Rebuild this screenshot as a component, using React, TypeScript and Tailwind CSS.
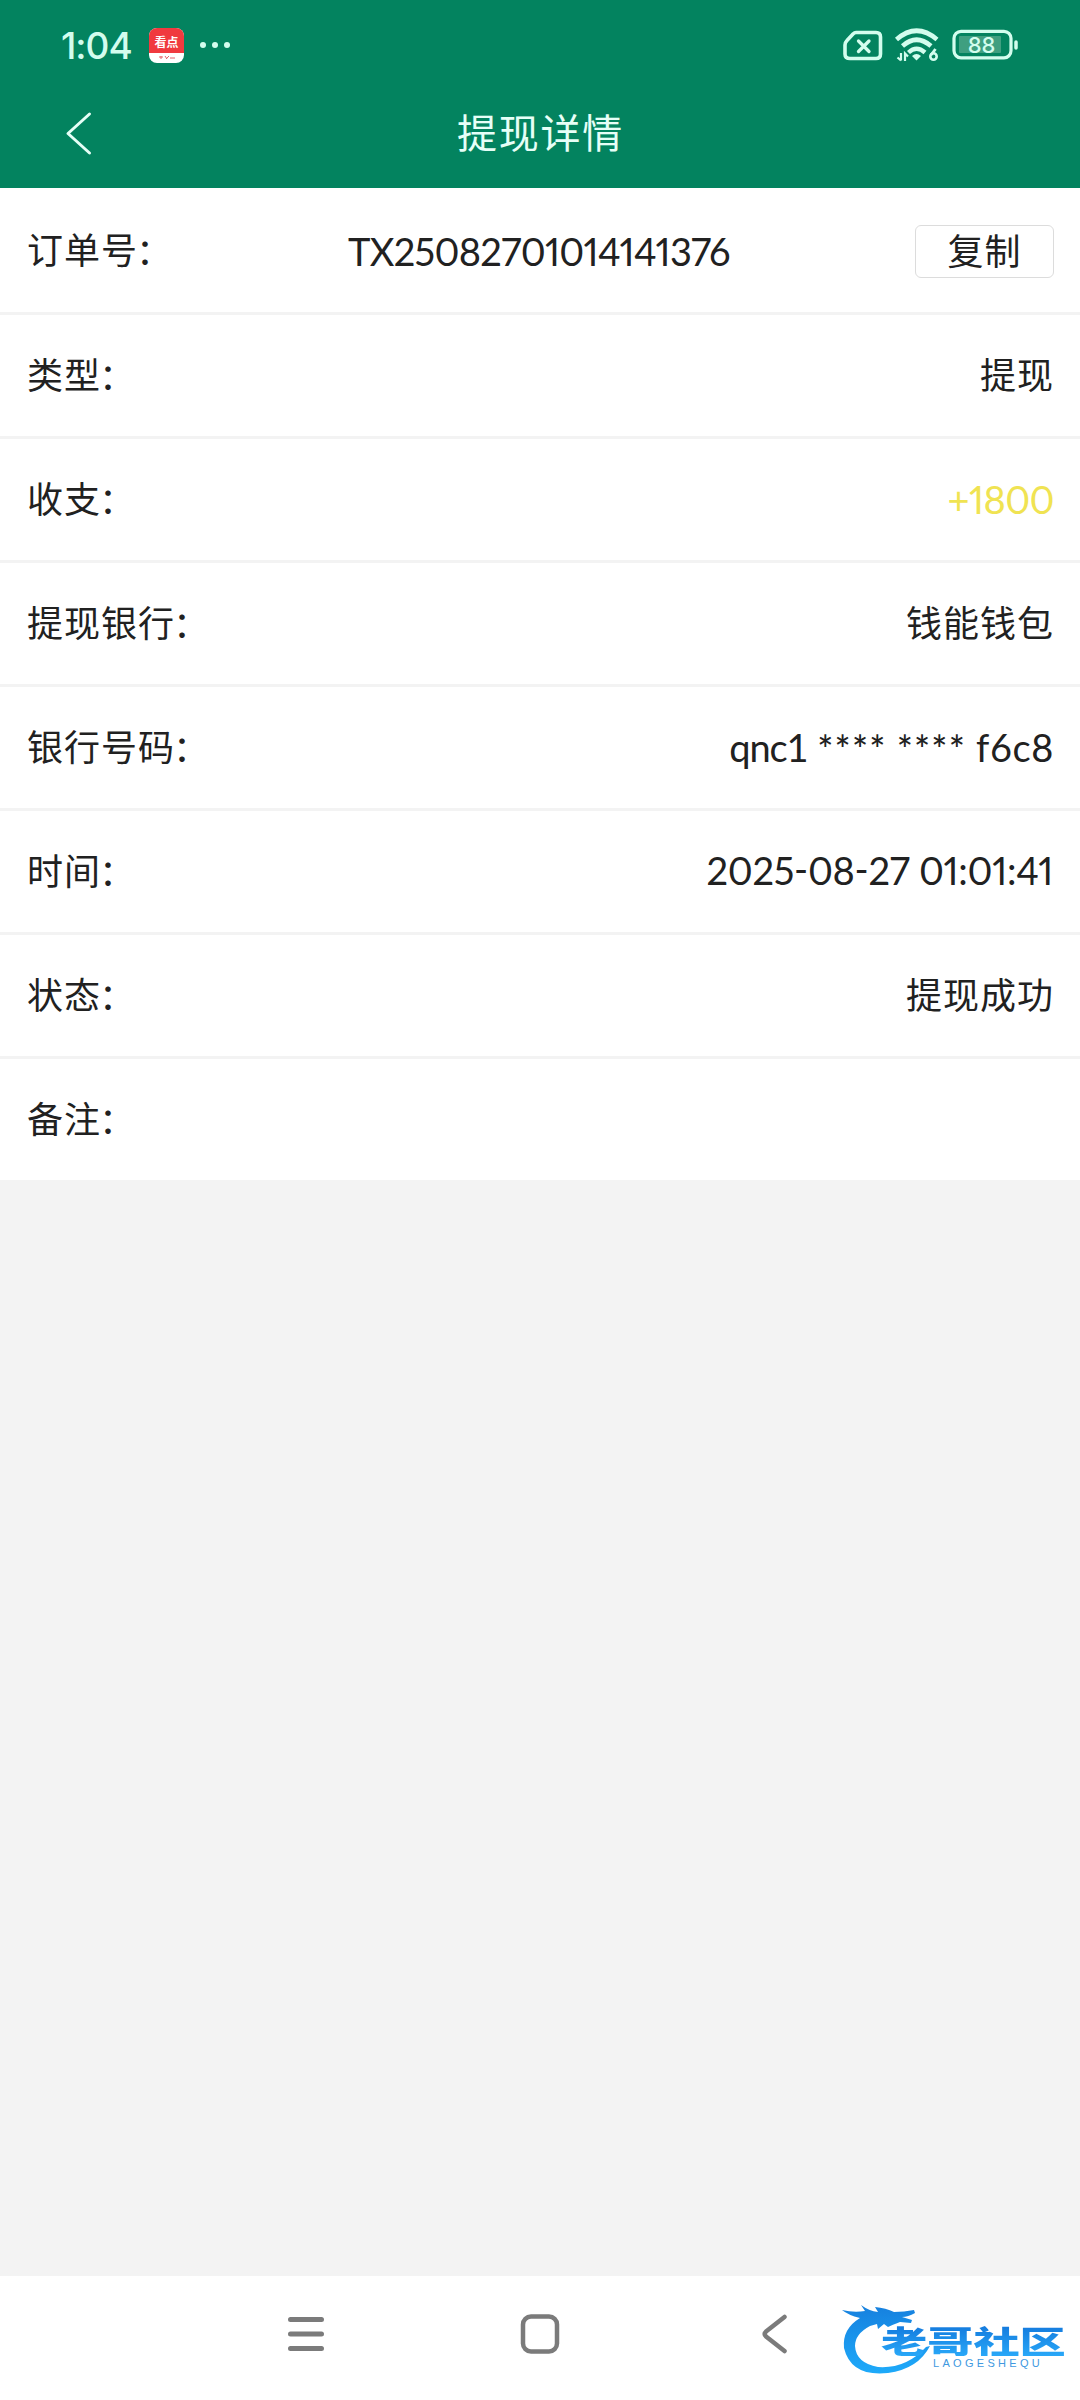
import type { ReactNode } from "react";

type RowProps = { label: string; children?: ReactNode; last?: boolean };

function Label({ text }: { text: string }) {
  return (
    <span className="tracking-[1px]">
      {text}
      <span className="relative left-[-2px] top-[1px]">：</span>
    </span>
  );
}

function Row({ label, children, last }: RowProps) {
  return (
    <div
      className={
        last
          ? "flex h-[121px] items-center justify-between bg-white pb-[1px] pl-[27px] pr-[26px]"
          : "flex h-[124px] items-center justify-between border-b-[3px] border-[#f3f3f3] bg-white pb-[1px] pl-[27px] pr-[26px]"
      }
    >
      <Label text={label} />
      {children}
    </div>
  );
}

function StatusBar() {
  return (
    <div className="flex h-[88px] items-center justify-between pl-[61px] pr-[60px] pt-[2px] text-[#d3fdee]">
      <div className="flex items-center">
        <span className="w-[88px] pt-[1px] font-['Inter'] text-[37px] font-medium leading-none tracking-[-1px]">1:04</span>
        <span className="flex h-[35px] w-[35px] flex-col items-center overflow-hidden rounded-[8px] bg-white">
          <span className="flex h-[25px] w-full items-center justify-center bg-[#f03a3f] pt-[3px] font-['Noto_Sans_CJK_SC'] text-[12px] font-bold leading-none text-white">
            看点
          </span>
          <svg width="18" height="6" viewBox="0 0 18 6" className="mt-[2px]">
            <path d="M1 2h4M3 1v3M7 1l2 3M8 4l3-3M12 3h5" stroke="#e2656c" strokeWidth="1" fill="none" />
          </svg>
        </span>
        <span className="ml-[16px] flex gap-[6px]">
          <i className="h-[6px] w-[6px] rounded-full bg-current" />
          <i className="h-[6px] w-[6px] rounded-full bg-current" />
          <i className="h-[6px] w-[6px] rounded-full bg-current" />
        </span>
      </div>
      <svg width="178" height="36" viewBox="842 28 178 36" fill="none" stroke="currentColor">
        <path d="M856 33.500H876Q880.500 33.500 880.500 38V55Q880.500 59.500 876 59.500H850Q845 59.500 845 55V46Q845 43.500 847 41.500L853 35Q854.500 33.500 856 33.500Z" strokeWidth="3.600" />
        <path d="M858.500 42L869 52.500M869 42L858.500 52.500" strokeWidth="3.300" strokeLinecap="round" />
        <path d="M896.500 40.500Q916.500 23 937 40.500" strokeWidth="4.600" />
        <path d="M902.500 47Q916.500 34.500 931 47" strokeWidth="4.600" />
        <path d="M908.500 53.500Q916.500 46 925 53.500" strokeWidth="4.400" />
        <path d="M912 57Q916.500 53 921 57L916.500 61.500Z" fill="currentColor" stroke="none" />
        <path d="M901 54V61.500M897.500 58.500L901 61.500M905 62V54.500L908 57.500" strokeWidth="2.200" />
        <path d="M935.500 50L931 56" strokeWidth="2.800" />
        <circle cx="933.500" cy="57.500" r="3.200" strokeWidth="2.600" />
        <rect x="954" y="32.300" width="57" height="26.500" rx="7" strokeWidth="3.200" />
        <rect x="959" y="37" width="42" height="17" rx="1" fill="#3f9f80" stroke="none" />
        <path d="M1016 43V49" strokeWidth="3.500" strokeLinecap="round" />
        <text x="981.500" y="53.500" textAnchor="middle" fill="currentColor" stroke="none" className="font-['Inter'] text-[22px] font-medium">88</text>
      </svg>
    </div>
  );
}

function Watermark() {
  return (
    <div className="absolute left-[840px] top-[22px] h-[84px] w-[226px]">
      <svg width="226" height="84" viewBox="0 0 226 84" className="absolute left-0 top-0">
        <defs>
          <linearGradient id="dragon" x1="0" y1="0" x2="0" y2="1">
            <stop offset="0" stopColor="#1680de" />
            <stop offset="1" stopColor="#1eaafa" />
          </linearGradient>
        </defs>
        <path
          fill="url(#dragon)"
          d="M2 12Q14 15 25 13L21 7Q29 13 38 14L35 9Q46 10 54 14Q64 14 74 12L75 15Q68 19 62 19L72 22L71 25L60 24Q52 27 48 29L44 26L38 31L37 26L30 28Q15 36 15 48Q16 65 38 69Q66 71 86 49L90 48Q78 71 48 75Q11 79 4 50Q2 31 20 20Q8 17 2 12Z"
        />
      </svg>
      <span className="absolute left-[41px] top-[26px] origin-top-left scale-x-[1.49] bg-gradient-to-b from-[#1478dc] to-[#29a8f8] bg-clip-text font-['Noto_Sans_CJK_SC'] text-[31px] font-black leading-[32px] text-transparent">
        老哥社区
      </span>
      <span className="absolute left-[93px] top-[60px] font-['Liberation_Sans'] text-[11px] leading-[10px] tracking-[3.300px] text-[#4199df]">
        LAOGESHEQU
      </span>
    </div>
  );
}

export default function App() {
  return (
    <div className="flex h-[2400px] w-[1080px] flex-col overflow-hidden bg-[#f3f3f3] font-['Lato','Noto_Sans_CJK_SC',sans-serif] text-[36px] leading-none text-[#212121]">
      <header className="h-[188px] bg-[#03835f]">
        <StatusBar />
        <div className="relative flex h-[86px] items-center justify-center">
          <svg width="30" height="48" viewBox="0 0 30 48" className="absolute left-[63px] top-[22px]" fill="none" stroke="#e6fff7" strokeWidth="3" strokeLinecap="round" strokeLinejoin="round">
            <path d="M26.500 4L5 23.500L26.500 43" />
          </svg>
          <h1 className="pl-[1px] font-['Noto_Sans_CJK_SC'] text-[40px] font-normal tracking-[1.800px] text-[#e6fff7]">提现详情</h1>
        </div>
      </header>
      <main className="flex-1">
        <div className="relative flex h-[127px] items-center justify-between border-b-[3px] border-[#f3f3f3] bg-white pl-[27px] pr-[26px]">
          <span className="w-[321px]"><Label text="订单号" /></span>
          <span className="flex-1 pt-[1px] text-[38px] tracking-[-0.700px] [font-feature-settings:'pnum']">TX25082701014141376</span>
          <button className="mt-[2px] flex h-[53px] w-[139px] items-center justify-center rounded-[6px] border border-[#dcdcdc] pb-[1px] tracking-[1px]">
            复制
          </button>
        </div>
        <Row label="类型"><span className="tracking-[1px]">提现</span></Row>
        <Row label="收支"><span className="text-[38px] tracking-[-0.600px] text-[#f0e352] [font-feature-settings:'pnum']">+1800</span></Row>
        <Row label="提现银行"><span className="tracking-[1px]">钱能钱包</span></Row>
        <Row label="银行号码">
          <span className="flex gap-[10px] text-[38px]">
            <span className="tracking-[-1.200px]">qnc1</span>
            <span className="relative top-[2px] font-medium tracking-[1.200px]">****</span>
            <span className="relative top-[2px] font-medium tracking-[1.200px]">****</span>
            <span className="tracking-[0.600px]">f6c8</span>
          </span>
        </Row>
        <Row label="时间"><span className="pb-[2px] pr-[1px] text-[38px] tracking-[-0.300px] [font-feature-settings:'pnum','case']">2025-08-27 01:01:41</span></Row>
        <Row label="状态"><span className="tracking-[1px]">提现成功</span></Row>
        <Row label="备注" last />
      </main>
      <nav className="relative h-[124px] bg-white">
        <div className="flex h-[116px] items-center pl-[287px] text-[#7b7b7b]">
          <svg width="38" height="40" viewBox="0 0 38 40" stroke="currentColor" strokeWidth="5" strokeLinecap="round">
            <path d="M3.500 5.500H34.500M3.500 20H34.500M3.500 34.500H34.500" />
          </svg>
          <svg width="40" height="40" viewBox="0 0 40 40" stroke="currentColor" strokeWidth="4.500" fill="none" className="ml-[195px]">
            <rect x="3" y="2.500" width="34" height="35" rx="8" />
          </svg>
          <svg width="26" height="40" viewBox="0 0 26 40" stroke="currentColor" strokeWidth="4.500" fill="none" strokeLinecap="round" strokeLinejoin="round" className="ml-[201px]">
            <path d="M23.500 3L5 17.500Q2.500 20 5 22.500L23.500 37" />
          </svg>
        </div>
        <Watermark />
      </nav>
    </div>
  );
}
